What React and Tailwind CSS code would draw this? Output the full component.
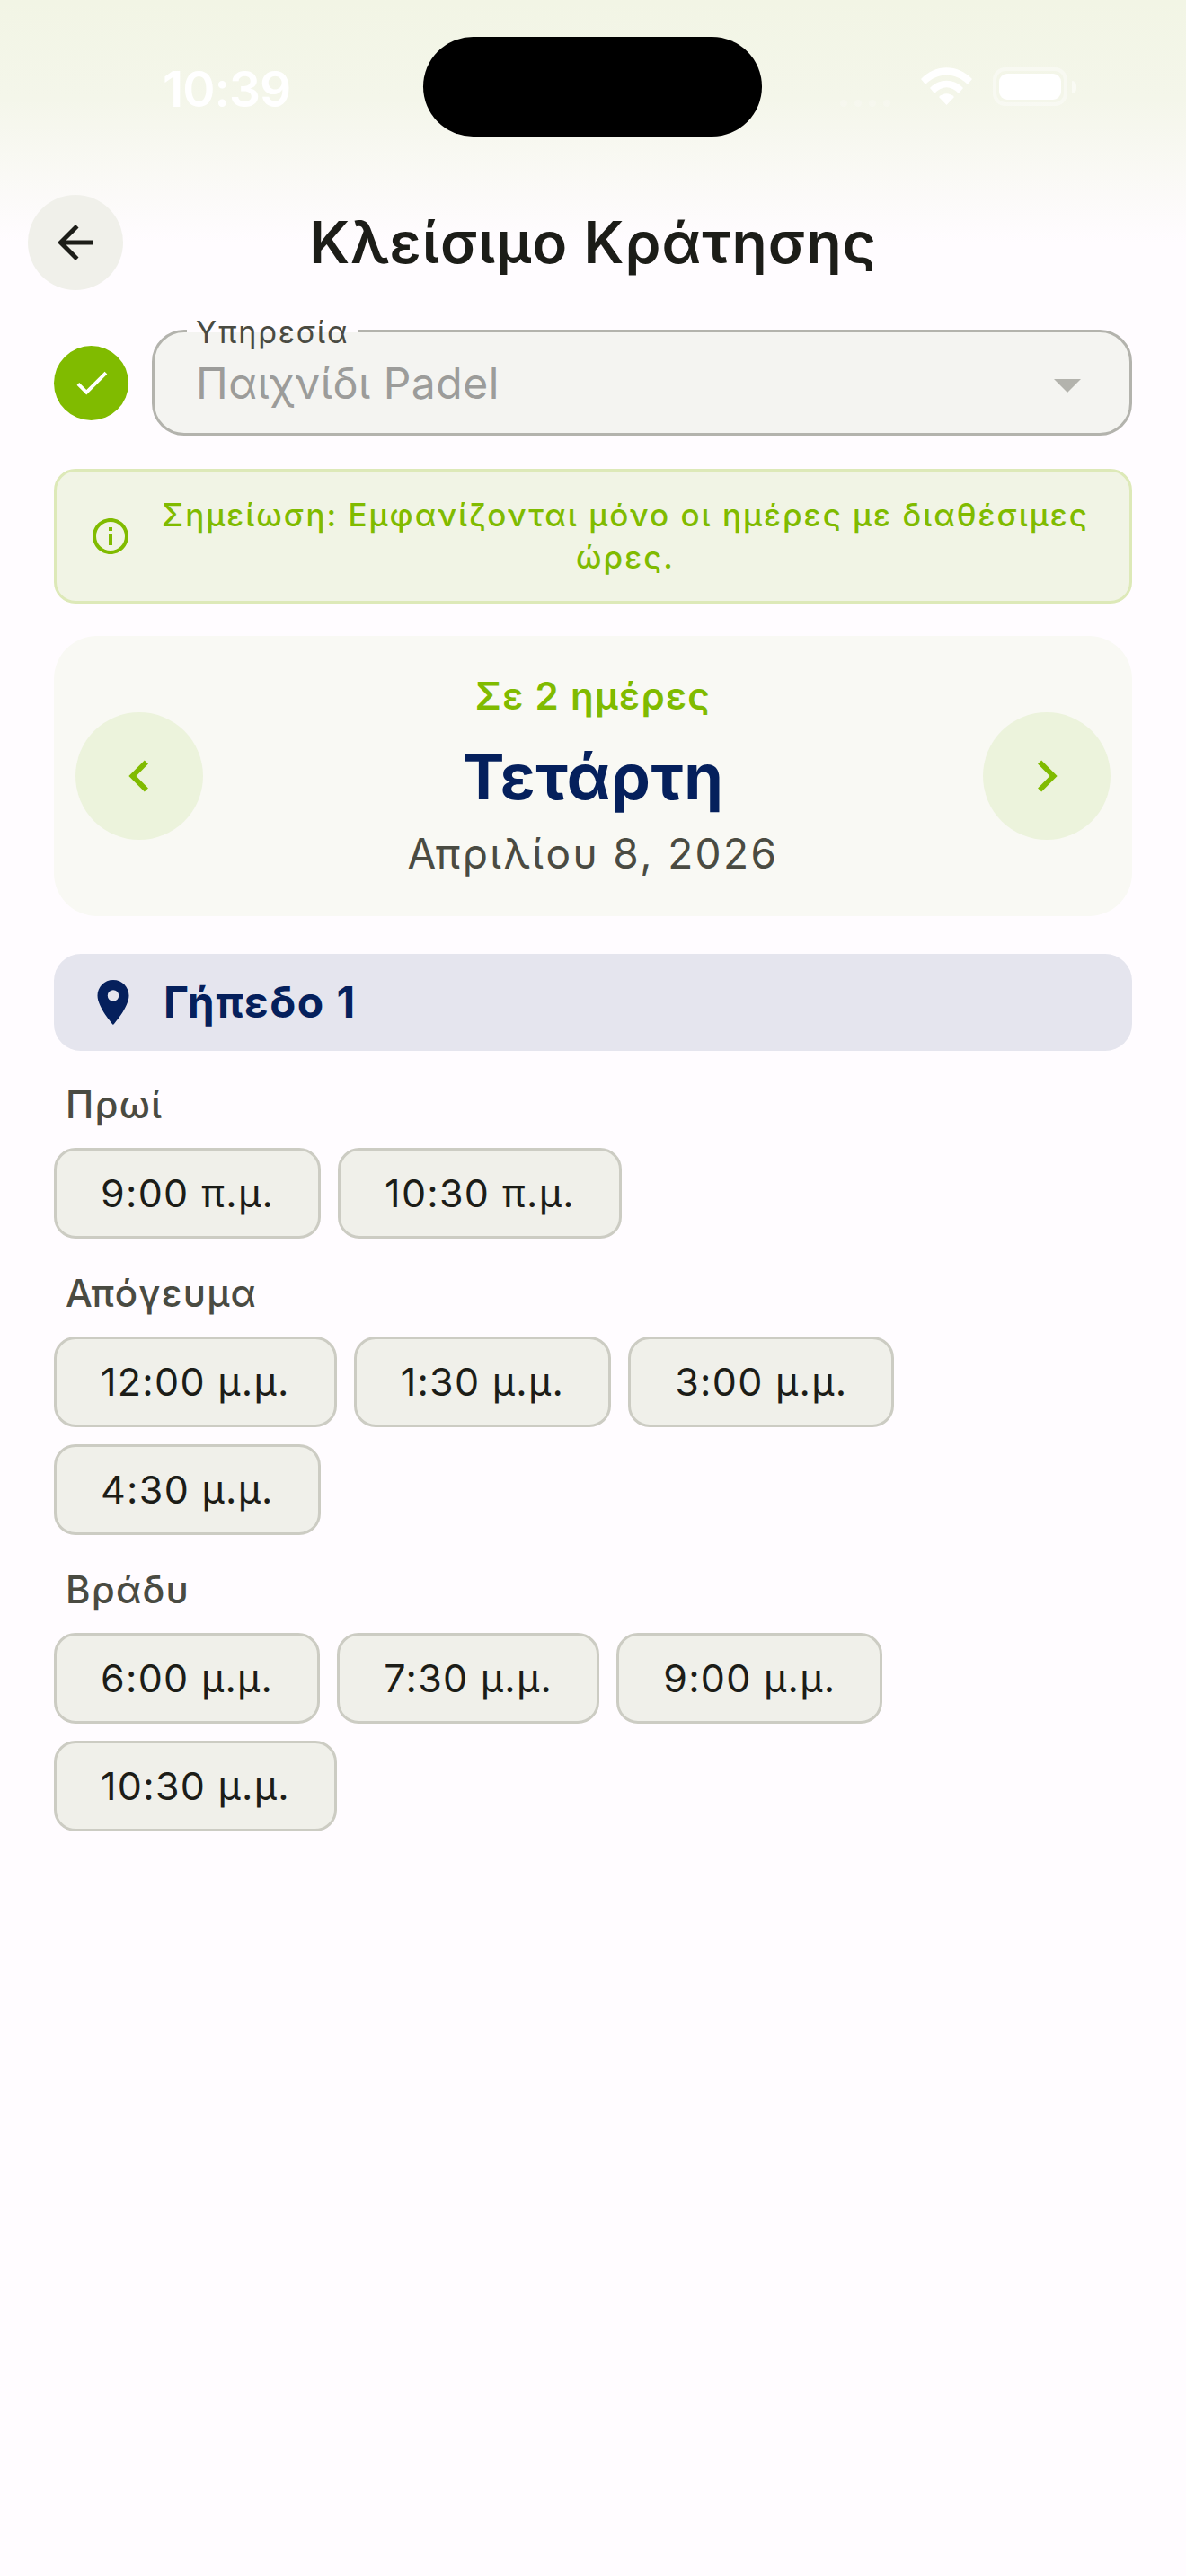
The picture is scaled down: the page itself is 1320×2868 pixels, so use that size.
import { MdArrowBack, MdCheck, MdChevronLeft, MdChevronRight, MdInfoOutline, MdLocationOn } from "react-icons/md";

const sections = [
  { label: "Πρωί", slots: ["9:00 π.μ.", "10:30 π.μ."] },
  { label: "Απόγευμα", slots: ["12:00 μ.μ.", "1:30 μ.μ.", "3:00 μ.μ.", "4:30 μ.μ."] },
  { label: "Βράδυ", slots: ["6:00 μ.μ.", "7:30 μ.μ.", "9:00 μ.μ.", "10:30 μ.μ."] },
];

function StatusBar() {
  return (
    <div className="flex h-[217px] items-start pl-[181px] pt-[41px]">
      <span className="mt-[27px] w-[290px] text-[55px] leading-[62px] font-semibold tracking-[-1px] text-white">10:39</span>
      <div className="h-[111px] w-[377px] rounded-full bg-black"></div>
      <div className="ml-[87px] mt-[34px] flex items-start">
        <div className="mt-[36px] flex w-[90px] gap-[8px] opacity-20">
          <span className="h-[8px] w-[8px] rounded-full bg-white"></span>
          <span className="h-[8px] w-[8px] rounded-full bg-white"></span>
          <span className="h-[8px] w-[8px] rounded-full bg-white"></span>
          <span className="h-[8px] w-[8px] rounded-full bg-white"></span>
        </div>
        <svg width="57" height="42" viewBox="0 0 57 42" fill="white">
          <path d="M0 13 C16 -4 41 -4 57 13 L52 19 C38 5 19 5 5 19 Z" />
          <path d="M10 23 C20 12 37 12 47 23 L42 29 C33 20 24 20 15 29 Z" />
          <path d="M20 33 C25 28 32 28 37 33 L28.500 42 Z" />
        </svg>
        <div className="ml-[23px] flex items-center">
          <div className="h-[43px] w-[83px] rounded-[14px] border-[4px] border-white/40 p-[3px]">
            <div className="h-full w-full rounded-[9px] bg-white"></div>
          </div>
          <div className="ml-[5px] h-[14px] w-[5px] rounded-r-full bg-white/50"></div>
        </div>
      </div>
    </div>
  );
}

export default function App() {
  return (
    <main className="min-h-[2868px] bg-[#fffcff] bg-[linear-gradient(to_bottom,#f2f5e5_0px,#f4f6ea_110px,#fffcff_270px)] font-['Inter',sans-serif] text-[#1c1d18]">
      <StatusBar />

      <header className="relative flex h-[106px] items-center justify-center">
        <button className="absolute left-[31px] flex h-[106px] w-[106px] items-center justify-center rounded-full bg-[#f0f0ea]">
          <MdArrowBack size={60} />
        </button>
        <h1 className="text-[64px] leading-none font-semibold tracking-[1px]">Κλείσιμο Κράτησης</h1>
      </header>

      <div className="px-[60px]">
        <div className="mt-[44px] flex items-center gap-[26px]">
          <div className="flex h-[83px] w-[83px] shrink-0 items-center justify-center rounded-full bg-[#80bb00] text-white">
            <MdCheck size={46} />
          </div>
          <div className="relative flex h-[118px] flex-1 items-center justify-between rounded-[36px] border-[3px] border-[#b3b3ad] bg-[#f4f4f1] pl-[46px] pr-[54px]">
            <span className="absolute left-[36px] top-[-22px] bg-[linear-gradient(to_bottom,#fffcff_50%,#f4f4f1_50%)] px-[10px] text-[34px] leading-[44px] tracking-[1.8px] text-[#4a4b42]">Υπηρεσία</span>
            <span className="mt-[2px] text-[48px] leading-none tracking-[0.5px] text-[#9c9c9a]">Παιχνίδι Padel</span>
            <div className="mt-[6px] h-0 w-0 border-x-[15px] border-t-[15px] border-x-transparent border-t-[#b3b3ad]"></div>
          </div>
        </div>

        <div className="mt-[37px] flex h-[150px] items-center gap-[14px] rounded-[24px] border-[3px] border-[#dde9b8] bg-[#f1f4e5] pl-[36px] pr-[26px]">
          <MdInfoOutline size={48} className="shrink-0 text-[#80bb00]" />
          <p className="flex-1 text-center text-[35px] leading-[47px] font-medium tracking-[2px] text-[#80bb00]">
            Σημείωση: Εμφανίζονται μόνο οι ημέρες με διαθέσιμες ώρες.
          </p>
        </div>

        <section className="mt-[36px] flex h-[312px] items-center justify-between rounded-[48px] bg-[#f9f9f4] px-[24px]">
          <button className="flex h-[142px] w-[142px] items-center justify-center rounded-full bg-[#ecf3dc] text-[#80bb00]">
            <MdChevronLeft size={70} />
          </button>
          <div className="flex flex-col items-center">
            <span className="text-[42px] leading-[48px] font-semibold tracking-[1.3px] text-[#80bb00]">Σε 2 ημέρες</span>
            <span className="mt-[24px] text-[70px] leading-[84px] font-bold tracking-[0.5px] text-[#05205c]">Τετάρτη</span>
            <span className="mt-[15px] text-[46px] leading-[56px] tracking-[2.4px] text-[#4a4b42]">Απριλίου 8, 2026</span>
          </div>
          <button className="flex h-[142px] w-[142px] items-center justify-center rounded-full bg-[#ecf3dc] text-[#80bb00]">
            <MdChevronRight size={70} />
          </button>
        </section>

        <div className="mt-[42px] flex h-[108px] items-center gap-[26px] rounded-[30px] bg-[#e5e5ee] pl-[36px]">
          <MdLocationOn size={60} className="shrink-0 text-[#05205c]" />
          <span className="text-[48px] leading-none font-bold tracking-[1.5px] text-[#05205c]">Γήπεδο 1</span>
        </div>

        <div className="mt-[36px] flex flex-col gap-[37px]">
          {sections.map((section) => (
            <div key={section.label}>
              <h2 className="pl-[13px] text-[42px] leading-[48px] font-medium tracking-[1.2px] text-[#4a4b42]">{section.label}</h2>
              <div className="mt-[24px] flex flex-wrap gap-[19px]">
                {section.slots.map((slot) => (
                  <button key={slot} className="h-[101px] rounded-[24px] border-[3px] border-[#ccccc3] bg-[#f0f0ea] px-[49px] text-[43px] leading-none tracking-[1.3px]">
                    {slot}
                  </button>
                ))}
              </div>
            </div>
          ))}
        </div>
      </div>
    </main>
  );
}
